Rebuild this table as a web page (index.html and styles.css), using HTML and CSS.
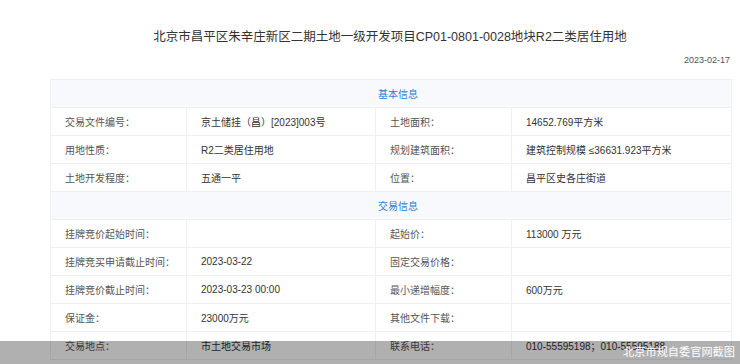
FILE: index.html
```html
<!DOCTYPE html>
<html lang="zh-CN">
<head>
  <meta charset="UTF-8" />
  <meta name="viewport" content="width=device-width, initial-scale=1.0"/>
  <title>北京市昌平区朱辛庄新区二期土地一级开发项目</title>
  <link rel="stylesheet" href="styles.css">
</head>
<body>

<div class="page">
  <h1 class="title">北京市昌平区朱辛庄新区二期土地一级开发项目CP01-0801-0028地块R2二类居住用地</h1>
  <div class="date">2023-02-17</div>

  <table class="info-table">
    <colgroup>
      <col class="c-label" />
      <col class="c-value" />
      <col class="c-label" />
      <col class="c-value-wide" />
    </colgroup>
    <tr class="section"><td colspan="4">基本信息</td></tr>
    <tr>
      <td class="label">交易文件编号：</td><td>京土储挂（昌）[2023]003号</td>
      <td class="label">土地面积：</td><td>14652.769平方米</td>
    </tr>
    <tr>
      <td class="label">用地性质：</td><td>R2二类居住用地</td>
      <td class="label">规划建筑面积：</td><td>建筑控制规模 ≤36631.923平方米</td>
    </tr>
    <tr>
      <td class="label">土地开发程度：</td><td>五通一平</td>
      <td class="label">位置：</td><td>昌平区史各庄街道</td>
    </tr>
    <tr class="section"><td colspan="4">交易信息</td></tr>
    <tr>
      <td class="label">挂牌竞价起始时间：</td><td></td>
      <td class="label">起始价：</td><td>113000 万元</td>
    </tr>
    <tr>
      <td class="label">挂牌竞买申请截止时间：</td><td>2023-03-22</td>
      <td class="label">固定交易价格：</td><td></td>
    </tr>
    <tr>
      <td class="label">挂牌竞价截止时间：</td><td>2023-03-23 00:00</td>
      <td class="label">最小递增幅度：</td><td>600万元</td>
    </tr>
    <tr>
      <td class="label">保证金：</td><td>23000万元</td>
      <td class="label">其他文件下载：</td><td></td>
    </tr>
    <tr>
      <td class="label">交易地点：</td><td>市土地交易市场</td>
      <td class="label">联系电话：</td><td>010-55595198；010-55595188</td>
    </tr>
  </table>
</div>

<div class="watermark">北京市规自委官网截图</div>

</body>
</html>
```

FILE: styles.css
```css
html, body { margin: 0; height: 100%; overflow: hidden; }
body {
  font-family: "Liberation Sans", "Noto Sans CJK SC", sans-serif;
  color: #333; background: #fff; position: relative;
}
.page { padding: 27px 10px 0 50px; }
.title {
  margin: 0; font-size: 12.5px; line-height: 20px; font-weight: normal;
  text-align: center; color: #333;
}
.date {
  margin-top: 7px; font-size: 9px; line-height: 12px;
  text-align: right; color: #555;
}
.info-table {
  margin-top: 13px; width: 680px; border-collapse: collapse;
  table-layout: fixed; font-size: 10px;
}
.c-label { width: 136px; }
.c-value { width: 189px; }
.c-value-wide { width: 220px; }
.info-table td {
  height: 27px; padding: 0 14px; border: 1px solid #eef0f3;
  color: #333; white-space: nowrap; overflow: hidden;
}
.info-table td.label { color: #555; }
.section td {
  background-color: #f7f9fc; color: #2f7bd0;
  text-align: center; padding-left: 28px;
}
.watermark {
  position: absolute; left: 0; right: 0; top: 341px; height: 23px;
  background: rgba(0, 0, 0, 0.31); color: #fff;
  font-size: 11.2px; line-height: 23px; text-align: right; padding-right: 5px;
}
```
